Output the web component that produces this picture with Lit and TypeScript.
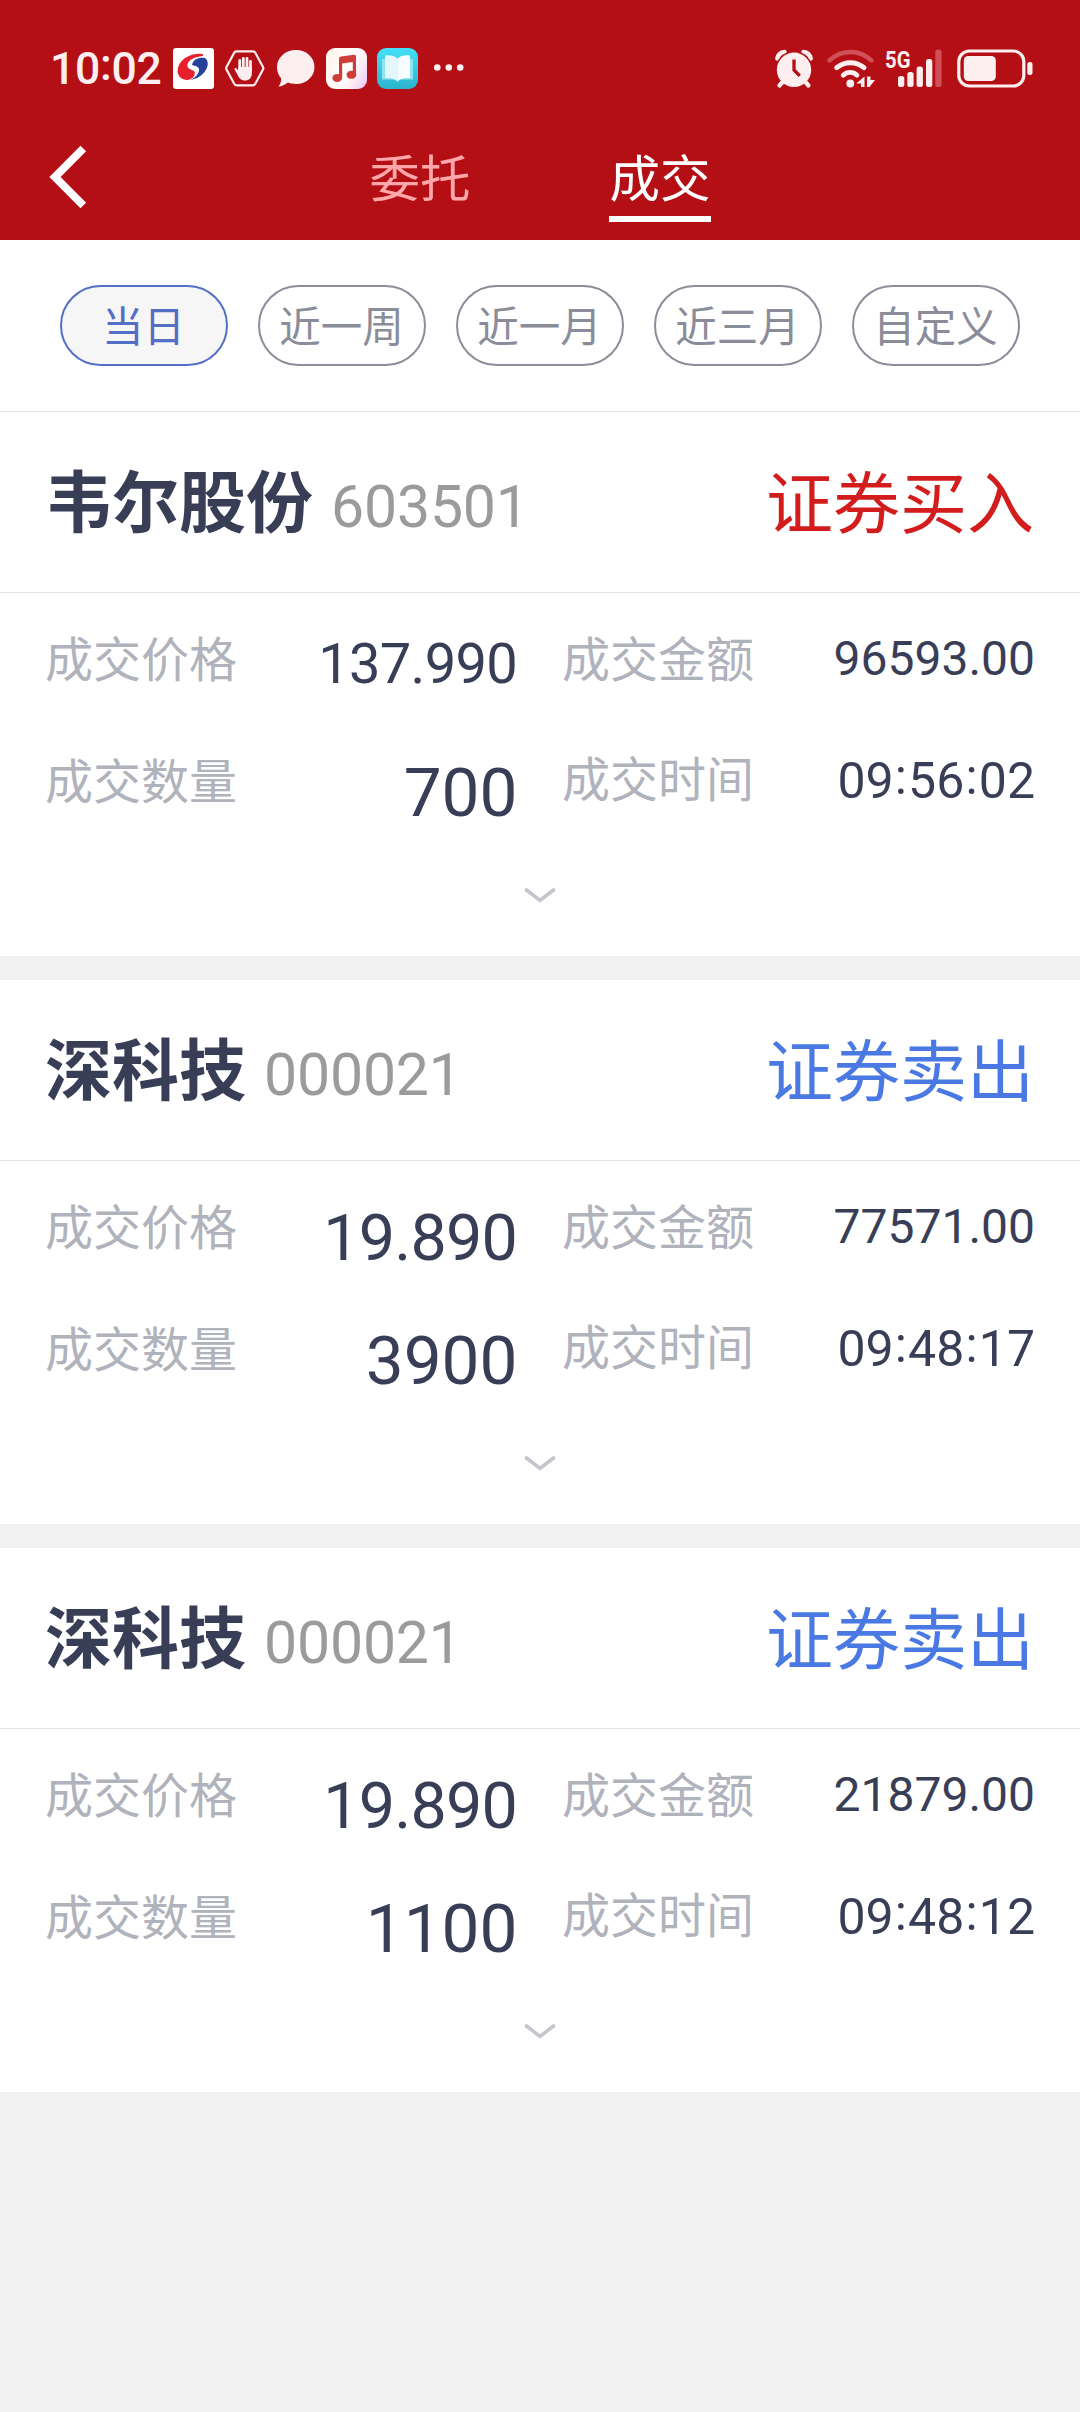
import { LitElement, html, css } from "lit";
import { customElement, property, state } from "lit/decorators.js";
import { classMap } from "lit/directives/class-map.js";

interface Deal {
  name: string;
  code: string;
  side: "buy" | "sell";
  price: string;
  priceSize: "mid" | "large";
  amount: string;
  volume: string;
  time: string;
}

const DEALS: Deal[] = [
  { name: "韦尔股份", code: "603501", side: "buy", price: "137.990", priceSize: "mid", amount: "96593.00", volume: "700", time: "09:56:02" },
  { name: "深科技", code: "000021", side: "sell", price: "19.890", priceSize: "large", amount: "77571.00", volume: "3900", time: "09:48:17" },
  { name: "深科技", code: "000021", side: "sell", price: "19.890", priceSize: "large", amount: "21879.00", volume: "1100", time: "09:48:12" },
];

const RANGES = ["当日", "近一周", "近一月", "近三月", "自定义"];
const TABS = ["委托", "成交"];

/* Clock text with its colons lifted to the middle of the digits. */
const clock = (value: string) =>
  value.split(":").map((part, i) => html`${i ? html`<span class="colon">:</span>` : ""}${part}`);

@customElement("status-bar")
class StatusBar extends LitElement {
  static styles = css`
    :host {
      display: flex;
      align-items: center;
      box-sizing: border-box;
      height: 137px;
      padding: 0 46px 0 50px;
      color: #fdeff0;
      font-family: Roboto, sans-serif;
    }
    svg { display: block; flex: none; overflow: visible; }
    .time {
      width: 123px;
      font-size: 44.5px;
      line-height: 54px;
      font-weight: 500;
      letter-spacing: -0.3px;
      white-space: nowrap;
    }
    .colon { vertical-align: 0.09em; line-height: 1; }
    .apps { display: flex; align-items: center; gap: 10px; }
    .system { display: flex; align-items: center; margin-left: auto; }
    .wifi { margin-left: 14px; }
    .signal { margin-left: 10px; }
    .battery { margin-left: 14px; }
    .net { font: 700 24.5px Roboto, sans-serif; }
  `;

  render() {
    return html`
      <span class="time">${clock("10:02")}</span>
      <span class="apps">
        <svg width="41" height="41" viewBox="0 0 41 41">
          <rect width="41" height="41" rx="3" fill="#fff" />
          <path d="M30 6.200C21 4.500 10 9 6 17C2.500 25 6 31.500 14 32C19.500 31.500 22 28 21.800 24.500C21.300 21.500 15.500 22 14.500 18.500C13.500 13.500 20 8.500 30 8Z" fill="#e81f2d" />
          <path d="M19 17C20 11.500 26 9 32 10C36.500 13 35 20 31.500 24C27.500 29 22 31.500 17.500 31.700C23 29.500 26.500 25 26 21C25 18 22 18 19 17Z" fill="#27419b" />
        </svg>
        <svg width="41" height="41" viewBox="0 0 41 41">
          <path d="M12.500 3.300H29Q30.500 3.300 31.300 4.800L39 19Q39.700 20.300 39 21.600L31.300 35.800Q30.500 37.300 29 37.300H12.500Q11 37.300 10.200 35.800L2.500 21.600Q1.800 20.300 2.500 19L10.200 4.800Q11 3.300 12.500 3.300Z" fill="none" stroke="#fdeff0" stroke-width="2.200" />
          <path d="M15.700 22V12.500M19.300 20V10.300M23 20V10.500M26.500 22V13.500" stroke="#fdeff0" stroke-width="2.800" stroke-linecap="round" />
          <path d="M14.300 19H27.900V25C27.900 30 25 32.500 21 32.500C17 32.500 15 30 13.600 27L10.600 21.500C10.200 20 12 19.600 12.800 20.800L14.300 23Z" fill="#fdeff0" />
        </svg>
        <svg width="41" height="41" viewBox="0 0 41 41">
          <path d="M21 2C31.500 2 39.500 9.500 39.500 19C39.500 28.500 31.500 36 21 36C18 36 15.500 35.700 13 34.600C10 37 6 38.700 3.500 38.500C5.500 36 6.500 33 6 30.300C3.300 27 2 23.500 2 19C2 9.500 10.500 2 21 2Z" fill="#fdeff0" />
        </svg>
        <svg width="41" height="41" viewBox="0 0 41 41">
          <defs>
            <linearGradient id="music" x1="0" y1="0.500" x2="1" y2="1">
              <stop offset="0" stop-color="#fff6ef" />
              <stop offset="0.400" stop-color="#fff" />
              <stop offset="0.650" stop-color="#fdeef2" />
              <stop offset="1" stop-color="#e6c5fb" />
            </linearGradient>
          </defs>
          <rect width="41" height="41" rx="9" fill="url(#music)" />
          <path d="M13 10.500Q13 8.800 15 8.400L28 6.800Q30 6.600 30 8.500V26H26.800V14L16.200 15.500V30H13Z" fill="#cf3d38" />
          <ellipse cx="11.200" cy="30" rx="4.900" ry="4" fill="#cf3d38" />
          <ellipse cx="25.400" cy="26.800" rx="4.900" ry="4" fill="#cf3d38" />
        </svg>
        <svg width="41" height="41" viewBox="0 0 41 41">
          <defs>
            <linearGradient id="book" x1="0" y1="0" x2="0" y2="1">
              <stop offset="0" stop-color="#45dff8" />
              <stop offset="1" stop-color="#2db4cd" />
            </linearGradient>
          </defs>
          <rect width="41" height="41" rx="9" fill="url(#book)" />
          <path d="M5 11H36V31.500H23L20.500 34L18 31.500H5Z" fill="#8fe3f0" />
          <path d="M8 7.500Q16 6.500 20.500 10.500V33Q16 29.500 8 30Z" fill="#e3f8fc" />
          <path d="M33 7.500Q25 6.500 20.500 10.500V33Q25 29.500 33 30Z" fill="#f6fdff" />
        </svg>
        <svg width="41" height="41" viewBox="0 0 41 41">
          <circle cx="9.300" cy="19.500" r="3.300" fill="#fdeff0" />
          <circle cx="20.800" cy="19.500" r="3.300" fill="#fdeff0" />
          <circle cx="32.200" cy="19.500" r="3.300" fill="#fdeff0" />
        </svg>
      </span>
      <span class="system">
        <svg width="38" height="40" viewBox="0 0 38 40">
          <path d="M2.300 9.500A8.500 8.500 0 0 1 9.500 3M28.500 3A8.500 8.500 0 0 1 35.700 9.500" fill="none" stroke="#fdeff0" stroke-width="4.500" stroke-linecap="round" />
          <circle cx="19" cy="20.800" r="18.600" fill="#b40f15" />
          <circle cx="19" cy="20.800" r="17.200" fill="#fdeff0" />
          <path d="M8 32.500L4.500 36.500M30 32.500L33.500 36.500" stroke="#fdeff0" stroke-width="4.200" stroke-linecap="round" />
          <path d="M19 10.500V21L24.800 26.800" fill="none" stroke="#b40f15" stroke-width="3.300" />
        </svg>
        <svg class="wifi" width="48" height="40" viewBox="0 0 48 40">
          <path d="M2.500 11.400A30 30 0 0 1 44.300 11.400" fill="none" stroke="#cf5157" stroke-width="4.500" stroke-linecap="round" />
          <path d="M9.700 18.700A21 21 0 0 1 37 18.700" fill="none" stroke="#fdeff0" stroke-width="5" stroke-linecap="round" />
          <path d="M16.200 26.200A10 10 0 0 1 30 26.200" fill="none" stroke="#fdeff0" stroke-width="4.800" stroke-linecap="round" />
          <circle cx="23.300" cy="34.500" r="3.900" fill="#fdeff0" />
          <path d="M37.500 27.500V38H34V34.500H29.200Z" fill="#fdeff0" />
          <path d="M40 38V27.500L43.500 27.500V31H48L42.500 38Z" fill="#fdeff0" />
        </svg>
        <svg class="signal" width="58" height="40" viewBox="0 0 58 40">
          <text class="net" x="0" y="18.500" textLength="25.500" lengthAdjust="spacingAndGlyphs" fill="#fdeff0">5G</text>
          <rect x="13" y="27" width="6.300" height="11" rx="2.500" fill="#fdeff0" />
          <rect x="22.300" y="23" width="6.300" height="15" rx="2.500" fill="#fdeff0" />
          <rect x="31.600" y="17.500" width="6.300" height="20.500" rx="2.500" fill="#fdeff0" />
          <rect x="41" y="10" width="6.300" height="28" rx="2.500" fill="#fdeff0" />
          <rect x="50.300" y="0.500" width="6.300" height="37.500" rx="2.500" fill="#cf5157" />
        </svg>
        <svg class="battery" width="77" height="40" viewBox="0 0 77 40">
          <rect x="1.800" y="2" width="65" height="35" rx="10.500" fill="none" stroke="#fdeff0" stroke-width="3.200" />
          <rect x="6.800" y="7" width="32" height="25" rx="4.500" fill="#fdeff0" />
          <rect x="70.300" y="13" width="5.200" height="13" rx="2.500" fill="#fdeff0" />
        </svg>
      </span>
    `;
  }
}

@customElement("deal-card")
class DealCard extends LitElement {
  @property({ attribute: false }) deal!: Deal;

  static styles = css`
    :host {
      display: block;
      box-sizing: border-box;
      height: 544px;
      background: #fff;
      color: #393e57;
      font-family: Roboto, "Noto Sans CJK SC", sans-serif;
    }
    .head {
      display: flex;
      align-items: center;
      justify-content: space-between;
      box-sizing: border-box;
      height: 181px;
      padding: 0 46px 6px 45px;
      border-bottom: 1px solid #e5e5e7;
    }
    .stock { display: flex; align-items: baseline; gap: 18px; padding-top: 2px; }
    .name, .side {
      font: 700 67px/80px "Noto Sans CJK SC", sans-serif;
    }
    .side { font-weight: 400; }
    .buy { color: #d21d1c; }
    .sell { color: #4a79e3; }
    .code { font-size: 59px; line-height: 70px; color: #9b9b9b; letter-spacing: -0.2px; }
    .body {
      display: grid;
      grid-template-columns: 1fr 1fr;
      grid-auto-rows: 120px;
      column-gap: 44px;
      padding: 29px 45px 0;
    }
    .field { display: flex; justify-content: space-between; align-items: flex-start; }
    .label {
      margin-top: -2px;
      font: 400 48px/72px "Noto Sans CJK SC", sans-serif;
      color: #b0b2bc;
    }
    .label.low { margin-top: 0; }
    .value { line-height: 1.5; white-space: nowrap; }
    .small { font-size: 48px; margin-top: 1px; }
    .clock { font-size: 50px; margin-top: 2px; }
    .mid { font-size: 56px; letter-spacing: -0.7px; padding-right: 1px; }
    .large { font-size: 64.6px; letter-spacing: -0.8px; padding-right: 1px; }
    .huge { font-size: 67.5px; padding-right: 0.5px; }
    .colon { padding: 0 1.2px; vertical-align: 0.08em; line-height: 1; }
    .more { display: block; margin: 25px auto 0; }
  `;

  render() {
    const d = this.deal;
    return html`
      <div class="head">
        <div class="stock">
          <span class="name">${d.name}</span>
          <span class="code">${d.code}</span>
        </div>
        <span class="side ${d.side}">${d.side === "buy" ? "证券买入" : "证券卖出"}</span>
      </div>
      <div class="body">
        <div class="field"><span class="label">成交价格</span><span class="value ${d.priceSize}">${d.price}</span></div>
        <div class="field"><span class="label">成交金额</span><span class="value small">${d.amount}</span></div>
        <div class="field"><span class="label low">成交数量</span><span class="value huge">${d.volume}</span></div>
        <div class="field"><span class="label">成交时间</span><span class="value clock">${clock(d.time)}</span></div>
      </div>
      <svg class="more" width="32" height="18" viewBox="0 0 32 18">
        <path d="M2.500 3L16 13.500L29.500 3" fill="none" stroke="#c4c6cd" stroke-width="3.600" stroke-linecap="round" />
      </svg>
    `;
  }
}

@customElement("app-root")
class AppRoot extends LitElement {
  @state() private tab = 1;
  @state() private range = 0;

  static styles = css`
    :host {
      display: block;
      box-sizing: border-box;
      width: 1080px;
      height: 2412px;
      overflow: hidden;
      background: #f1f1f1;
      font-family: "Noto Sans CJK SC", sans-serif;
    }
    .top { height: 240px; background: #b40f15; }
    .nav {
      display: grid;
      grid-template-columns: 1fr auto 1fr;
      height: 103px;
    }
    .back { display: block; margin: 8px 0 0 48px; }
    .tabs { display: flex; gap: 138px; }
    .tab {
      box-sizing: border-box;
      width: 102px;
      height: 85px;
      padding-top: 8px;
      border-bottom: 6px solid transparent;
      font-size: 50.5px;
      line-height: 60px;
      text-align: center;
      color: #ffa7aa;
    }
    .tab.on { color: #fff; border-color: #fff; }
    .ranges {
      display: flex;
      justify-content: space-between;
      box-sizing: border-box;
      height: 172px;
      padding: 45px 60px 0;
      background: #fff;
      border-bottom: 1px solid #e5e5e7;
    }
    .pill {
      box-sizing: border-box;
      width: 168px;
      height: 81px;
      padding-right: 1px;
      border: 2px solid #8a8d9a;
      border-radius: 41px;
      font-size: 41.5px;
      line-height: 74px;
      text-align: center;
      color: #8a8d99;
    }
    .pill.on { border-color: #5470c6; background: #f6f6f7; color: #5470c6; }
    .list { display: flex; flex-direction: column; gap: 24px; }
  `;

  render() {
    return html`
      <div class="top">
        <status-bar></status-bar>
        <div class="nav">
          <svg class="back" width="42" height="64" viewBox="0 0 42 64">
            <path d="M35.300 3.500L7 32L35.300 60.500" fill="none" stroke="#fff" stroke-width="8" />
          </svg>
          <div class="tabs">
            ${TABS.map((t, i) => html`<div class=${classMap({ tab: true, on: i === this.tab })} @click=${() => (this.tab = i)}>${t}</div>`)}
          </div>
        </div>
      </div>
      <div class="ranges">
        ${RANGES.map((r, i) => html`<div class=${classMap({ pill: true, on: i === this.range })} @click=${() => (this.range = i)}>${r}</div>`)}
      </div>
      <div class="list">${DEALS.map((d) => html`<deal-card .deal=${d}></deal-card>`)}</div>
    `;
  }
}
